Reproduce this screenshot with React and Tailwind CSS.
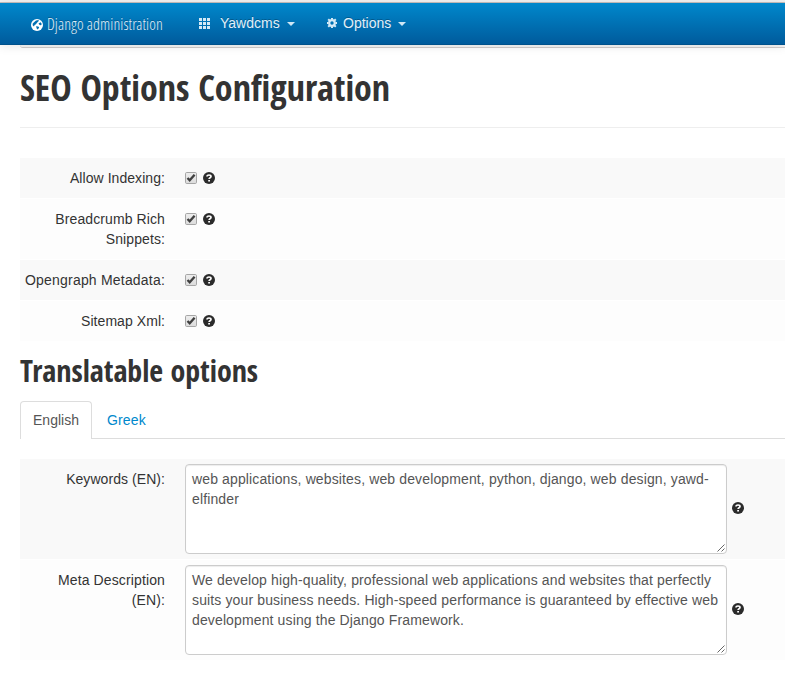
const arial = 'font-["Liberation_Sans",Arial,sans-serif]';
const condensed = 'font-["Open_Sans_Condensed","Open_Sans",sans-serif] [font-stretch:75%]';
const condensedLight = 'font-["Open_Sans_Condensed_Light","Open_Sans",sans-serif] [font-stretch:75%]';

function HelpIcon({ className = "" }) {
  return (
    <svg width="12" height="12" viewBox="0 0 12 12" className={`shrink-0 ${className}`}>
      <circle cx="6" cy="6" r="6" fill="#2b2b2b" />
      <path d="M4 4.600C4 3.400 4.900 3 6 3s2 .5 2 1.500c0 1.300-1.900 1.100-1.900 2.500" fill="none" stroke="#fff" strokeWidth="1.700" />
      <path d="M5.200 8h1.800v1.600H5.200z" fill="#fff" />
    </svg>
  );
}

function Checkbox() {
  return (
    <svg width="12" height="12" viewBox="0 0 12 12" className="shrink-0">
      <defs>
        <linearGradient id="box" x1="0" y1="0" x2="0" y2="1">
          <stop offset="0" stopColor="#eeeeee" />
          <stop offset="1" stopColor="#dcdcdc" />
        </linearGradient>
      </defs>
      <rect x=".5" y=".5" width="11" height="11" rx="1.2" fill="url(#box)" stroke="#a6a6a6" />
      <path d="M2.500 6l2.200 2.300L9.600 2.700" fill="none" stroke="#404040" strokeWidth="2.300" />
    </svg>
  );
}

function Row({ label, shaded, children, className = "", labelClass = "tracking-[0.06px]" }) {
  return (
    <div className={`flex p-[5px] ${shaded ? "bg-[#f9f9f9]" : "bg-[#fdfdfd]"} ${className}`}>
      <div className={`w-[140px] shrink-0 pt-[5px] text-right ${labelClass}`}>{label}</div>
      {children}
    </div>
  );
}

function CheckRow(props) {
  return (
    <Row {...props}>
      <div className="ml-5 flex h-[30px] items-center gap-[6px]">
        <Checkbox />
        <HelpIcon />
      </div>
    </Row>
  );
}

function TextRow({ text, ...props }) {
  return (
    <Row {...props} className="h-[100px]">
      <div className="ml-5 flex items-center gap-[5px]">
        <div className="relative h-[90px] w-[542px] rounded-[4px] border border-[#ccc] bg-white px-[6px] py-1 tracking-[0.13px] text-[#555] shadow-[inset_0_1px_1px_rgba(0,0,0,0.075)]">
          {text}
          <svg width="8" height="8" viewBox="0 0 8 8" className="absolute right-px bottom-px">
            <path d="M.5 7.500l7-7M4.500 7.500l3-3" fill="none" stroke="#666" strokeWidth="1" />
          </svg>
        </div>
        <HelpIcon className="mb-[2px]" />
      </div>
    </Row>
  );
}

function Caret() {
  return <span className="mt-px ml-[7px] h-0 w-0 border-x-4 border-t-4 border-x-transparent border-t-[#cfe7f5]" />;
}

export default function App() {
  return (
    <div className={`h-[678px] w-[785px] overflow-hidden bg-white text-[14px] leading-5 text-[#333] ${arial}`}>
      <div className="h-[3px] border-b border-[#c5bfbd] bg-[#f2f1f0]" />
      <nav className="relative flex h-[42px] items-start border-b border-[#00528c] bg-linear-to-b from-[#0088cc] to-[#005b9c] text-[#e0f0f9] shadow-[0_1px_10px_rgba(0,0,0,0.1)] [text-shadow:0_-1px_0_rgba(0,0,0,0.25)]">
        <div className="ml-[31px] flex w-[168px] items-center pt-[11px]">
          <svg width="12" height="12" viewBox="0 0 12 12" className="mt-[2px]">
            <circle cx="6" cy="6" r="6" fill="#fff" />
            <path d="M5 1.500L7.500 1 7.800 2 6.500 3.200 5.500 4.500 4.600 5.500 3.600 6 3 7.400 1.800 6.500 1.600 4.800 3 3.200zM7.500 4.500L9.600 3.300 10.800 5 10 6.200 8.600 6.100zM5 7.200L7.300 7.500 8.200 8.600 6.800 10.600 5.800 9.800z" fill="#0070b3" />
          </svg>
          <span className={`ml-1 text-[16px] font-light tracking-[0.09px] whitespace-nowrap ${condensedLight}`}>Django administration</span>
        </div>
        <div className="flex w-[128px] items-center pt-[10px]">
          <svg width="11" height="11" viewBox="0 0 11 11" fill="#d5eaf6" className="mt-px">
            <path d="M0 0h3v3H0zM4 0h3v3H4zM8 0h3v3H8zM0 4h3v3H0zM4 4h3v3H4zM8 4h3v3H8zM0 8h3v3H0zM4 8h3v3H4zM8 8h3v3H8z" />
          </svg>
          <span className="ml-[10px]">Yawdcms</span>
          <Caret />
        </div>
        <div className="flex items-center pt-[10px]">
          <svg width="10" height="10" viewBox="0 0 10 10" fill="none" stroke="#d5eaf6">
            <circle cx="5" cy="5" r="2.800" strokeWidth="2.200" />
            <path d="M5 0v1.500M5 8.500V10M0 5h1.500M8.500 5H10M1.200 1.200l1.200 1.200M7.600 7.600l1.200 1.200M8.800 1.200l-1.200 1.200M2.400 7.600l-1.200 1.200" strokeWidth="2" />
          </svg>
          <span className="ml-[6px]">Options</span>
          <Caret />
        </div>
      </nav>
      <main className="ml-5">
        <div className="h-[3px] rounded-bl-[4px] border-b border-[#d1cdcd] bg-[#f5f5f5]" />
        <h1 className={`h-[80px] border-b border-[#eee] pt-5 text-[36px] leading-[40px] font-bold tracking-[-0.03px] whitespace-nowrap ${condensed}`}>
          SEO Options Configuration
        </h1>
        <div className="mt-[30px] flex flex-col gap-px">
          <CheckRow label="Allow Indexing:" shaded />
          <CheckRow label="Breadcrumb Rich Snippets:" className="h-[60px]" labelClass="tracking-[0.1px]" />
          <CheckRow label="Opengraph Metadata:" shaded labelClass="tracking-[0.2px] whitespace-nowrap" />
          <CheckRow label="Sitemap Xml:" />
        </div>
        <h2 className={`mt-[10px] text-[30px] leading-[40px] font-bold tracking-[-0.05px] whitespace-nowrap ${condensed}`}>Translatable options</h2>
        <div className="mt-[10px] flex h-[38px] border-b border-[#ddd]">
          <div className="h-[38px] w-[72px] rounded-t-[4px] border border-b-0 border-[#ddd] bg-white pt-2 text-center text-[#555]">English</div>
          <div className="ml-[15px] pt-[9px] tracking-[0.15px] text-[#0088cc]">Greek</div>
        </div>
        <div className="mt-5 flex flex-col gap-px">
          <TextRow
            label="Keywords (EN):"
            shaded
            text="web applications, websites, web development, python, django, web design, yawd-elfinder"
          />
          <TextRow
            label="Meta Description (EN):"
            labelClass="tracking-[0.125px]"
            text="We develop high-quality, professional web applications and websites that perfectly suits your business needs. High-speed performance is guaranteed by effective web development using the Django Framework."
          />
        </div>
      </main>
    </div>
  );
}
